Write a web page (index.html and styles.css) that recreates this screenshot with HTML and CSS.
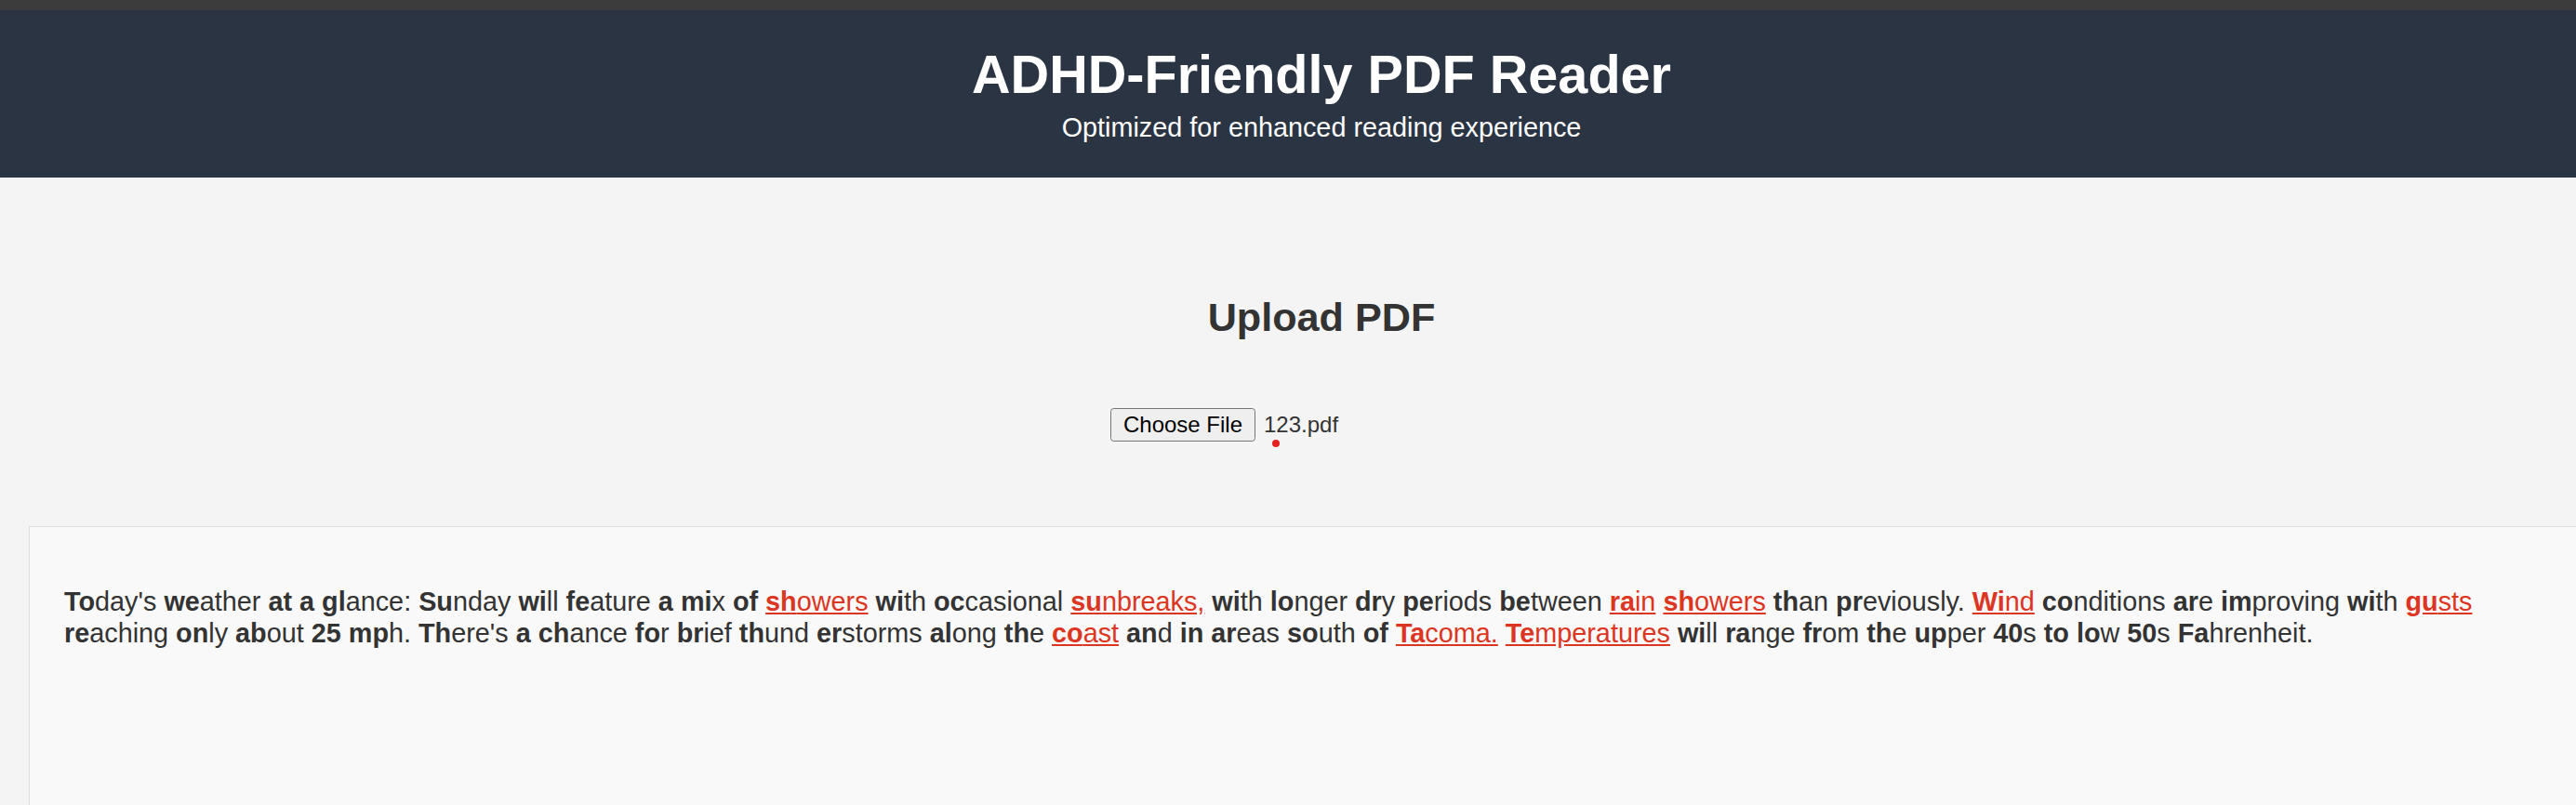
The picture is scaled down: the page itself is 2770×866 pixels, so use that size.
FILE: index.html
```html
<!DOCTYPE html>
<html lang="en">
<head>
<meta charset="utf-8">
<title>ADHD-Friendly PDF Reader</title>
<link rel="stylesheet" href="styles.css">
</head>
<body>
<div class="page">
  <div class="chrome-strip"></div>
  <header class="site-header">
    <h1 class="site-title">ADHD-Friendly PDF Reader</h1>
    <p class="site-subtitle">Optimized for enhanced reading experience</p>
  </header>
  <main class="main">
    <section class="upload">
      <h2 class="upload-title">Upload PDF</h2>
      <div class="file-input">
        <button class="file-btn" type="button">Choose File</button>
        <span class="file-name">123.pdf</span>
        <span class="cursor-dot"></span>
      </div>
    </section>
    <section class="reader">
      <p class="reader-text"><b>To</b>day's <b>we</b>ather <b>at</b> <b>a</b> <b>gl</b>ance: <b>Su</b>nday <b>wi</b>ll <b>fe</b>ature <b>a</b> <b>mi</b>x <b>of</b> <span class="hl"><b>sh</b>owers</span> <b>wi</b>th <b>oc</b>casional <span class="hl"><b>su</b>nbreaks,</span> <b>wi</b>th <b>lo</b>nger <b>dr</b>y <b>pe</b>riods <b>be</b>tween <span class="hl"><b>ra</b>in</span> <span class="hl"><b>sh</b>owers</span> <b>th</b>an <b>pr</b>eviously. <span class="hl"><b>Wi</b>nd</span> <b>co</b>nditions <b>ar</b>e <b>im</b>proving <b>wi</b>th <span class="hl"><b>gu</b>sts</span> <b>re</b>aching <b>on</b>ly <b>ab</b>out <b>25</b> <b>mp</b>h. <b>Th</b>ere's <b>a</b> <b>ch</b>ance <b>fo</b>r <b>br</b>ief <b>th</b>und <b>er</b>storms <b>al</b>ong <b>th</b>e <span class="hl"><b>co</b>ast</span> <b>an</b>d <b>in</b> <b>ar</b>eas <b>so</b>uth <b>of</b> <span class="hl"><b>Ta</b>coma.</span> <span class="hl"><b>Te</b>mperatures</span> <b>wi</b>ll <b>ra</b>nge <b>fr</b>om <b>th</b>e <b>up</b>per <b>40</b>s <b>to</b> <b>lo</b>w <b>50</b>s <b>Fa</b>hrenheit.</p>
    </section>
  </main>
</div>
</body>
</html>
```

FILE: styles.css
```css
html, body {
  margin: 0;
  padding: 0;
  overflow: hidden;
  background: #f4f4f4;
}

body {
  font-family: "Liberation Sans", Arial, sans-serif;
  color: #333333;
}

.page {
  width: 2842px;
  min-height: 866px;
  background: #f4f4f4;
}

.chrome-strip {
  height: 11px;
  background: #3c3c3c;
}

.site-header {
  background: #2b3443;
  color: #ffffff;
  text-align: center;
  padding: 36px 0 37px;
}

.site-title {
  margin: 0 0 8px;
  font-size: 57.6px;
  line-height: 66px;
  font-weight: 700;
}

.site-subtitle {
  margin: 0;
  font-size: 28.8px;
  line-height: 33px;
}

.upload {
  padding-top: 125px;
  text-align: center;
}

.upload-title {
  margin: 0;
  font-size: 43.2px;
  line-height: 50px;
  font-weight: 700;
  color: #333333;
}

.file-input {
  position: relative;
  width: 454px;
  height: 36px;
  margin: 73px auto 0;
  display: flex;
  align-items: center;
  gap: 9px;
}

.file-btn {
  box-sizing: border-box;
  width: 156px;
  height: 36px;
  padding: 0;
  margin: 0;
  border: 1.8px solid #767676;
  border-radius: 3.6px;
  background: #efefef;
  color: #000000;
  font-family: "Liberation Sans", Arial, sans-serif;
  font-size: 24px;
  line-height: 1;
}

.file-name {
  font-size: 24px;
  color: #333333;
  line-height: 1;
}

.cursor-dot {
  position: absolute;
  left: 174px;
  top: 34px;
  width: 8px;
  height: 8px;
  border-radius: 50%;
  background: #e52222;
}

.reader {
  margin: 91px 40px 0 31px;
  min-height: 400px;
  background: #f9f9f9;
  border: 1px solid #dddddd;
  padding: 34px 37px;
}

.reader-text {
  margin: 28.8px 0 0;
  font-size: 28.8px;
  line-height: 1.2;
  color: #333333;
}

.reader-text b {
  font-weight: 700;
}

.hl {
  color: #dc3522;
  text-decoration: underline;
  text-decoration-color: #dc3522;
}
```
